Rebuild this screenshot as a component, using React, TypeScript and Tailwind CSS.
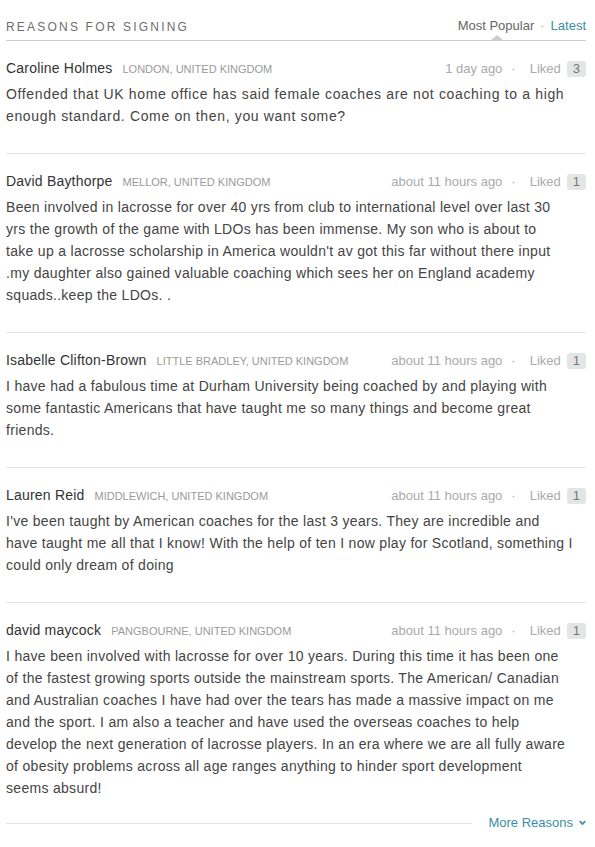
const reasons = [
  {
    name: "Caroline Holmes",
    location: "London, United Kingdom",
    time: "1 day ago",
    likes: 3,
    wide: true,
    lines: [
      "Offended that UK home office has said female coaches are not coaching to a high",
      "enough standard. Come on then, you want some?",
    ],
  },
  {
    name: "David Baythorpe",
    location: "Mellor, United Kingdom",
    time: "about 11 hours ago",
    likes: 1,
    lines: [
      "Been involved in lacrosse for over 40 yrs from club to international level over last 30",
      "yrs the growth of the game with LDOs has been immense. My son who is about to",
      "take up a lacrosse scholarship in America wouldn't av got this far without there input",
      ".my daughter also gained valuable coaching which sees her on England academy",
      "squads..keep the LDOs. .",
    ],
  },
  {
    name: "Isabelle Clifton-Brown",
    location: "Little Bradley, United Kingdom",
    time: "about 11 hours ago",
    likes: 1,
    lines: [
      "I have had a fabulous time at Durham University being coached by and playing with",
      "some fantastic Americans that have taught me so many things and become great",
      "friends.",
    ],
  },
  {
    name: "Lauren Reid",
    location: "Middlewich, United Kingdom",
    time: "about 11 hours ago",
    likes: 1,
    lines: [
      "I've been taught by American coaches for the last 3 years. They are incredible and",
      "have taught me all that I know! With the help of ten I now play for Scotland, something I",
      "could only dream of doing",
    ],
  },
  {
    name: "david maycock",
    location: "Pangbourne, United Kingdom",
    time: "about 11 hours ago",
    likes: 1,
    lines: [
      "I have been involved with lacrosse for over 10 years. During this time it has been one",
      "of the fastest growing sports outside the mainstream sports. The American/ Canadian",
      "and Australian coaches I have had over the tears has made a massive impact on me",
      "and the sport. I am also a teacher and have used the overseas coaches to help",
      "develop the next generation of lacrosse players. In an era where we are all fully aware",
      "of obesity problems across all age ranges anything to hinder sport development",
      "seems absurd!",
    ],
  },
];

export default function App() {
  return (
    <div className="min-h-screen w-full bg-white font-['Liberation_Sans',Arial,sans-serif]">
      <div className="pl-[6px] pr-[9px] pt-[17px]">
        {/* Header */}
        <div className="flex items-end justify-between border-b border-[#cccccc] pb-[4px] relative">
          <h2 className="text-[12px] leading-[18px] tracking-[2.2px] text-[#6e6e6e] uppercase">
            Reasons for signing
          </h2>
          <div className="flex items-center text-[13px] leading-[18px] pb-[1px]">
            <span className="text-[#666666] relative">
              Most Popular
              <span className="absolute left-[33px] top-[18px] w-0 h-0 border-l-[6px] border-r-[6px] border-b-[5px] border-l-transparent border-r-transparent border-b-[#cccccc]" />
            </span>
            <span className="text-[#aaaaaa] mx-[6px]">·</span>
            <span className="text-[#3a8ea6]">Latest</span>
          </div>
        </div>

        {/* Rows */}
        {reasons.map((r, i) => (
          <div
            key={r.name}
            className={
              i === reasons.length - 1
                ? "pt-4 pb-[12px]"
                : "border-b border-[#e4e4e4] pt-4 pb-[26px]"
            }
          >
            <div className="flex items-center justify-between leading-[22px]">
              <div className="flex items-baseline">
                <span className="text-[14px] tracking-[0.2px] text-[#333333]">{r.name}</span>
                <span className="ml-[10px] text-[11px] uppercase text-[#9a9a9a]">{r.location}</span>
              </div>
              <div className="flex items-center text-[13px]">
                <span className="text-[#aaaaaa]">{r.time}</span>
                <span className="text-[#aaaaaa] mx-[9px]">·</span>
                <span className="text-[#aaaaaa] ml-[5px]">Liked</span>
                <span className="ml-[6px] rounded-[3px] bg-[#e4e6e6] text-[#777777] px-[6px] leading-[16px]">
                  {r.likes}
                </span>
              </div>
            </div>
            <p
              className={
                r.wide
                  ? "mt-[3px] text-[14px] leading-[22px] tracking-[0.65px] text-[#444444]"
                  : "mt-[3px] text-[14px] leading-[22px] tracking-[0.3px] text-[#444444]"
              }
            >
              {r.lines.map((line) => (
                <span key={line} className="block whitespace-nowrap">
                  {line}
                </span>
              ))}
            </p>
          </div>
        ))}

        {/* Footer */}
        <div className="flex items-center h-6">
          <div className="flex-1 border-t border-[#e4e4e4]" />
          <div className="ml-[16px] flex items-center text-[13px] text-[#3a8ea6]">
            More Reasons
            <svg className="ml-[6px]" width="7" height="6" viewBox="0 0 7 6" fill="none">
              <path d="M0.8 1.2l2.7 2.8 2.7-2.8" stroke="#3a8ea6" strokeWidth="1.8" />
            </svg>
          </div>
        </div>
      </div>
    </div>
  );
}
